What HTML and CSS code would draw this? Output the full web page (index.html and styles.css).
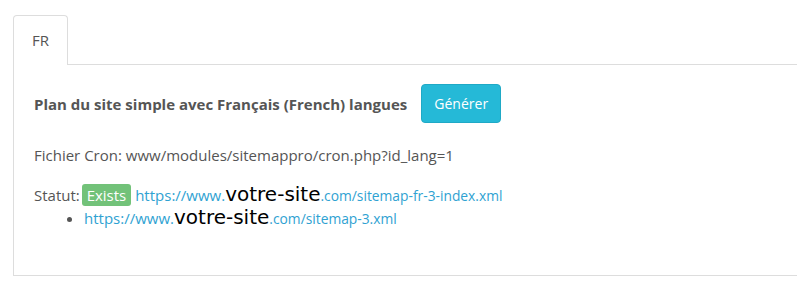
FILE: index.html
```html
<!DOCTYPE html>
<html lang="fr">
<head>
  <meta charset="UTF-8">
  <title>Sitemap</title>
  <link rel="stylesheet" href="styles.css">
</head>
<body>
  <div class="tabs">
    <ul class="tab-nav">
      <li class="tab active">FR</li>
      <li class="tab-rest"></li>
    </ul>
    <div class="tab-panel">
      <div class="gen-row">
        <strong>Plan du site simple avec Français (French) langues</strong>
        <button type="button" class="btn-gen">Générer</button>
      </div>
      <p class="cron">Fichier Cron: www/modules/sitemappro/cron.php?id_lang=1</p>
      <div class="status">
        Statut: <span class="badge">Exists</span>
        <a href="#">https://www.<span class="site">votre-site</span><span class="tail">.com/sitemap-fr-3-index.xml</span></a>
        <ul class="maps">
          <li><a href="#">https://www.<span class="site">votre-site</span><span class="tail">.com/sitemap-3.xml</span></a></li>
        </ul>
      </div>
    </div>
  </div>
</body>
</html>
```

FILE: styles.css
```css
body {
  margin: 0;
  padding: 0;
  background: #fff;
  font-family: "Open Sans", "Liberation Sans", sans-serif;
  font-size: 15px;
  color: #555;
}

.tabs {
  padding: 15px 0 0 13px;
}

.tab-nav {
  display: flex;
  list-style: none;
  margin: 0;
  padding: 0;
}

.tab {
  width: 53px;
  height: 49px;
  line-height: 49px;
  text-align: center;
  border: 1px solid #ddd;
  border-bottom: none;
  border-radius: 4px 4px 0 0;
  color: #555;
  font-size: 15px;
}

.tab-rest {
  flex: 1;
  border-bottom: 1px solid #ddd;
}

.tab-panel {
  border-left: 1px solid #ddd;
  border-bottom: 1px solid #ddd;
  height: 191px;
  padding: 19px 20px 0 20px;
}

.gen-row {
  display: flex;
  align-items: center;
  gap: 14px;
}

.gen-row strong {
  font-weight: 700;
  font-size: 15px;
  color: #555;
}

.btn-gen {
  font-family: inherit;
  font-size: 14px;
  color: #fff;
  background: #25b9d7;
  border: 1px solid #1fa9c6;
  border-radius: 4px;
  width: 80px;
  height: 39px;
  padding: 0;
}

.cron {
  margin: 22px 0 0;
  line-height: 20px;
}

.status {
  margin-top: 19px;
  line-height: 22px;
}

.badge {
  display: inline-block;
  background: #72c279;
  color: #fff;
  border-radius: 3px;
  padding: 0 5px;
  margin-left: -2px;
  line-height: 22px;
}

.status a {
  color: #2fa2d2;
  text-decoration: none;
}

.site {
  color: #000;
  font-family: "DejaVu Sans", sans-serif;
  font-size: 20px;
  line-height: 16px;
}

.tail {
  font-size: 13.8px;
}

.maps {
  margin: 0;
  padding-left: 50px;
}
```
